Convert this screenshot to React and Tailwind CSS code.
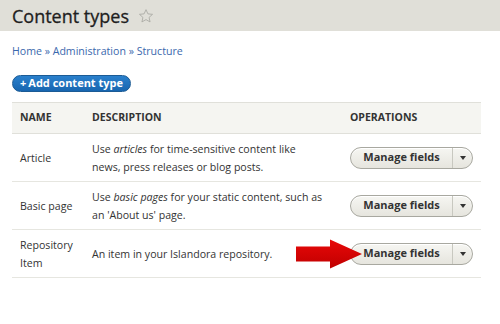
import React from "react";

const font = { fontFamily: '"Open Sans", "Lucida Grande", Verdana, sans-serif' };

function ManageButton() {
  return (
    <div className="flex h-[22px] w-[123px] items-stretch rounded-full border border-[#a8a8a0] bg-gradient-to-b from-[#f6f6f2] to-[#e6e5de] shadow-[inset_0_1px_0_#ffffff]">
      <div className="flex flex-1 items-center justify-center whitespace-nowrap text-[11px] font-bold text-[#333]">Manage fields</div>
      <div className="flex w-[20px] items-center justify-center border-l border-[#c8c8c0]">
        <svg width="6" height="4" viewBox="0 0 6 4"><path d="M0 0h6L3 4z" fill="#333" /></svg>
      </div>
    </div>
  );
}

function Row({ name, desc, children }) {
  return (
    <div className="flex h-[48px] items-center border-b border-[#e6e6e0] text-[10.6px] text-[#333]">
      <div className="w-[72px] whitespace-nowrap pl-2 leading-[18px]">{name}</div>
      <div className="w-[258px] whitespace-nowrap pl-2 leading-[18px]">{desc}</div>
      <div className="flex w-[139px] pl-2">{children}</div>
    </div>
  );
}

export default function App() {
  return (
    <div className="relative h-[324px] w-[500px] overflow-hidden bg-white" style={font}>
      <div className="flex h-[31px] items-center gap-2 bg-[#e0dfd8] px-3 pt-[1px]">
        <h1 className="text-[18px] leading-none text-[#1e1e1e] [-webkit-text-stroke:0.3px_#1e1e1e]">Content types</h1>
        <svg width="16" height="16" viewBox="0 0 24 24" className="ml-[1px]">
          <path d="M12 2.5l2.9 6.3 6.9.7-5.2 4.6 1.5 6.8L12 17.4l-6.1 3.5 1.5-6.8-5.2-4.6 6.9-.7z" fill="none" stroke="#a9a9a3" strokeWidth="1.3" strokeLinejoin="round" />
        </svg>
      </div>
      <div className="px-3 pt-[13px] text-[10.6px] leading-[14px] text-[#3a68ad]">
        Home » Administration » Structure
      </div>
      <div className="px-3 pt-[17px]">
        <div className="flex h-[17px] w-[119px] items-center justify-center gap-[2px] whitespace-nowrap rounded-full border border-[#1b5b95] bg-gradient-to-b from-[#2a80cc] to-[#1766b0] text-[11px] font-bold text-white">
          <span>+</span><span>Add content type</span>
        </div>
      </div>
      <div className="mx-3 mt-[10px] w-[469px]">
        <div className="flex h-[32px] items-center border-y border-[#e0e0da] bg-[#f5f5f1] text-[10.5px] font-bold uppercase text-[#333]">
          <div className="w-[72px] pl-2">Name</div>
          <div className="w-[258px] pl-2">Description</div>
          <div className="w-[139px] pl-2">Operations</div>
        </div>
        <Row name="Article" desc={<>Use <em>articles</em> for time-sensitive content like<br />news, press releases or blog posts.</>}>
          <ManageButton />
        </Row>
        <Row name="Basic page" desc={<>Use <em>basic pages</em> for your static content, such as<br />an 'About us' page.</>}>
          <ManageButton />
        </Row>
        <Row name={<>Repository<br />Item</>} desc="An item in your Islandora repository.">
          <ManageButton />
        </Row>
      </div>
      <svg className="absolute left-[294px] top-[238px]" width="70" height="32" viewBox="0 0 70 32">
        <defs>
          <linearGradient id="ar" x1="0" y1="0" x2="0" y2="1">
            <stop offset="0" stopColor="#e80808" />
            <stop offset="1" stopColor="#c00000" />
          </linearGradient>
        </defs>
        <path d="M2 8.5h34V1.5l32 14.5-32 14.5v-7H2z" fill="url(#ar)" />
      </svg>
    </div>
  );
}
